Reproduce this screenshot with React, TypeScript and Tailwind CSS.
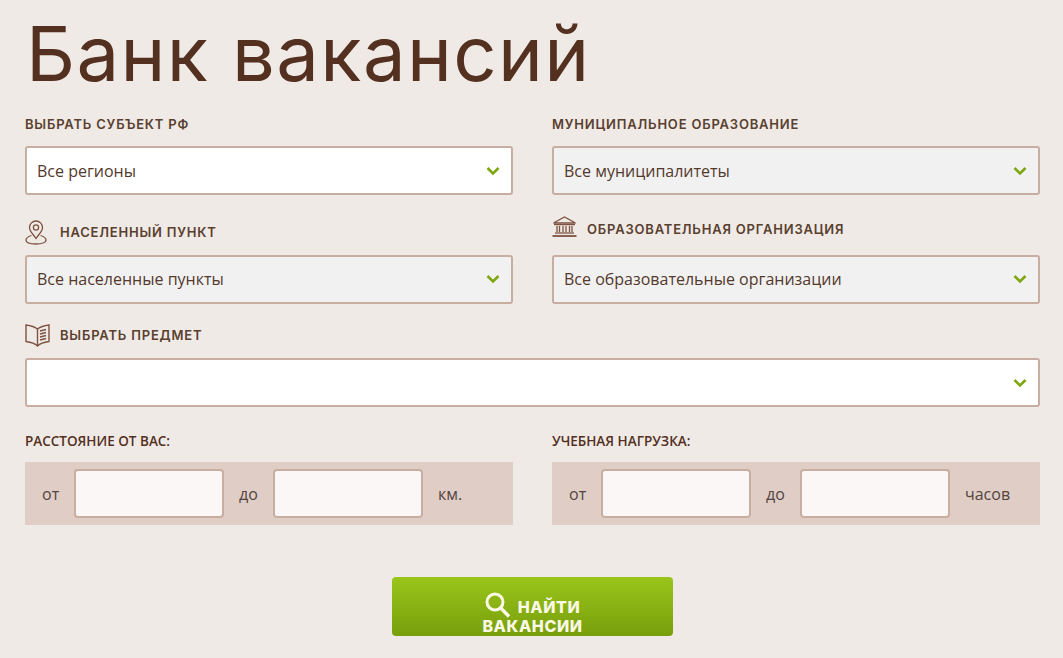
const OPEN = "font-['Open_Sans',sans-serif]";

function Chevron() {
  return (
    <svg width="14" height="10" viewBox="0 0 14 10" fill="none" className="shrink-0">
      <path d="M1.5 2 L7 7.5 L12.5 2" stroke="#7ea60f" strokeWidth="2.6" />
    </svg>
  );
}

function Select({ text, white, up }: { text?: string; white?: boolean; up?: boolean }) {
  return (
    <div className={`h-[49px] flex items-center justify-between pl-[10px] pr-[11px] border-2 border-[#c8ada1] rounded-[3px] text-[16px] text-[#53392c] ${up ? "pb-[2px]" : ""} ${white ? "bg-white" : "bg-[#f2f1f2]"}`}>
      <span>{text}</span>
      <Chevron />
    </div>
  );
}

function Label({ children, className = "" }: { children: React.ReactNode; className?: string }) {
  return <div className={`font-['Inter',sans-serif] font-semibold text-[13px] tracking-[0.8px] uppercase text-[#59402f] leading-[16px] whitespace-nowrap ${className}`}>{children}</div>;
}

function Pin() {
  return (
    <svg width="22" height="25" viewBox="0 0 22 25" fill="none" stroke="#7d5240" strokeWidth="1.3">
      <path d="M11 18.5 C8 14 4.5 11.5 4.5 7.5 A6.5 6.5 0 0 1 17.5 7.5 C17.5 11.5 14 14 11 18.5 Z" />
      <circle cx="11" cy="7.5" r="2.6" />
      <path d="M6.5 15.5 C3 16.5 1 18 1 20 C1 22.5 5.5 24 11 24 C16.5 24 21 22.5 21 20 C21 18 19 16.5 15.5 15.5" />
    </svg>
  );
}

function Bank() {
  return (
    <svg width="25" height="21" viewBox="0 0 25 21" fill="none" stroke="#7d5240" strokeWidth="1.3">
      <path d="M1.5 7 L12.5 1 L23.5 7 Z" />
      <path d="M2 8.6 H23" />
      <path d="M5 10 V16 M7.5 10 V16 M11 10 V16 M14 10 V16 M17.5 10 V16 M20 10 V16" />
      <path d="M3 17 H22" />
      <path d="M0.5 20 H24.5" strokeWidth="1.8" />
    </svg>
  );
}

function Book() {
  return (
    <svg width="25" height="23" viewBox="0 0 25 23" fill="none" stroke="#7d5240" strokeWidth="1.4">
      <path d="M12.5 5 C10 3 5 1.5 1 1 V17.5 C5 18 10 19.5 12.5 22 C15 19.5 20 18 24 17.5 V1 C20 1.5 15 3 12.5 5 Z" />
      <path d="M12.5 5 V22" />
      <path d="M15 7 L21 5.5 M15 10 L21 8.5 M15 13 L21 11.5 M15 16 L21 14.5" />
    </svg>
  );
}

function Search() {
  return (
    <svg width="25" height="26" viewBox="0 0 25 26" fill="none" stroke="#fbf8e6" strokeWidth="3">
      <circle cx="10" cy="10" r="8" />
      <path d="M15.8 16 L24 24.5" strokeWidth="3.4" />
    </svg>
  );
}

function Range({ unit }: { unit: string }) {
  const input = "w-[150px] h-[49px] bg-[#fbf7f6] border-2 border-[#c8ada1] rounded-[4px]";
  return (
    <div className="h-[63px] bg-[#dfcdc6] flex items-center pl-[17px] text-[16px] text-[#53453f]">
      <span className="w-[32px]">от</span>
      <div className={input} />
      <span className="w-[49px] pl-[15px]">до</span>
      <div className={input} />
      <span className="pl-[15px]">{unit}</span>
    </div>
  );
}

function SmallLabel({ children }: { children: React.ReactNode }) {
  return <div className="text-[13.5px] font-semibold text-[#53301f] leading-[16px] mb-[13px]">{children}</div>;
}

export default function App() {
  return (
    <div className={`w-[1063px] h-[658px] overflow-hidden bg-[#f0eae6] pl-[25px] pr-[23px] ${OPEN}`}>
      <h1 className="font-['Inter',sans-serif] font-normal text-[#53301f] text-[76px] leading-[106px] pl-[1px] whitespace-nowrap tracking-[1.35px]">Банк вакансий</h1>
      <div className="grid grid-cols-[488px_488px] gap-x-[39px]">
        <div>
          <Label className="mt-[10px] mb-[14px]">Выбрать субъект РФ</Label>
          <Select text="Все регионы" white />
        </div>
        <div>
          <Label className="mt-[10px] mb-[14px]">Муниципальное образование</Label>
          <Select text="Все муниципалитеты" />
        </div>
        <div className="mt-[25px]">
          <div className="flex items-center gap-[13px] h-[25px] mb-[10px]">
            <Pin />
            <Label className="-mt-[2px]">Населенный пункт</Label>
          </div>
          <Select text="Все населенные пункты" up />
        </div>
        <div className="mt-[21px]">
          <div className="flex items-center gap-[10px] h-[21px] mb-[18px]">
            <Bank />
            <Label className="mt-[4px]">Образовательная организация</Label>
          </div>
          <Select text="Все образовательные организации" up />
        </div>
      </div>
      <div className="flex items-center gap-[10px] h-[23px] mt-[20px] mb-[11px]">
        <Book />
        <Label className="-mt-[2px]">Выбрать предмет</Label>
      </div>
      <Select white />
      <div className="grid grid-cols-[488px_488px] gap-x-[39px] mt-[26px]">
        <div>
          <SmallLabel>РАССТОЯНИЕ ОТ ВАС:</SmallLabel>
          <Range unit="км." />
        </div>
        <div>
          <SmallLabel>УЧЕБНАЯ НАГРУЗКА:</SmallLabel>
          <Range unit="часов" />
        </div>
      </div>
      <div className="flex justify-center mt-[52px]">
        <div className="w-[281px] h-[59px] overflow-hidden rounded-[4px] bg-gradient-to-b from-[#9ac51a] to-[#789f0c] pt-[15px] text-center font-['Inter',sans-serif] font-extrabold text-[16px] tracking-[0.6px] leading-[20px] text-[#fbf8e6]">
          <div className="flex justify-center items-center gap-[8px] h-[26px]">
            <Search />
            <span className="pt-[4px]">НАЙТИ</span>
          </div>
          <div className="-mt-[2px]">ВАКАНСИИ</div>
        </div>
      </div>
    </div>
  );
}
